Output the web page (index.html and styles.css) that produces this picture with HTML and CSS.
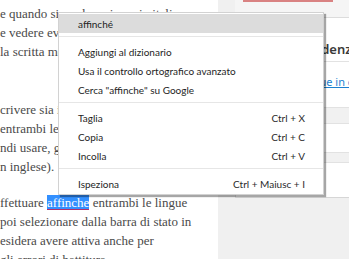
FILE: index.html
```html
<!DOCTYPE html>
<html lang="it">
<head>
    <meta charset="UTF-8">
    <meta name="viewport" content="width=device-width, initial-scale=1.0">
    <title>Menu contestuale</title>
    <link rel="stylesheet" href="styles.css">
</head>
<body>
    <div class="page">
        <main class="article">
            <p class="para para-first">
                <span class="line">e quando si vuole scrivere in italiano</span>
                <span class="line">e vedere evidenziati gli errori di</span>
                <span class="line">la scritta mostrata nella barra</span>
            </p>
            <p class="para para-second">
                <span class="line">crivere sia in italiano che in</span>
                <span class="line">entrambi le lingue attive nel</span>
                <span class="line">ndi usare, già dal primo avvio</span>
                <span class="line">n inglese).</span>
            </p>
            <p class="para">
                <span class="line">ffettuare <span class="selected">affinche</span> entrambi le lingue</span>
                <span class="line">poi selezionare dalla barra di stato in</span>
                <span class="line">esidera avere attiva anche per</span>
                <span class="line">gli errori di battitura</span>
            </p>
        </main>

        <aside class="sidebar">
            <div class="side-top">
                <div class="side-button"></div>
            </div>
            <div class="widget">
                <div class="widget-title">Corrispondenze</div>
                <div class="widget-row">
                    <a class="widget-link" href="#">Tutte le lingue in elenco</a>
                </div>
                <div class="widget-band"></div>
                <div class="widget-row widget-row-short"></div>
                <div class="widget-band widget-band-thin"></div>
                <div class="widget-row widget-row-last"></div>
            </div>
        </aside>

        <!-- Menu contestuale del correttore -->
        <div class="context-menu">
            <div class="menu-item menu-item-active">affinché</div>
            <div class="menu-separator"></div>
            <div class="menu-item">Aggiungi al dizionario</div>
            <div class="menu-item">Usa il controllo ortografico avanzato</div>
            <div class="menu-item">Cerca "affinche" su Google</div>
            <div class="menu-separator"></div>
            <div class="menu-item"><span>Taglia</span><span class="shortcut">Ctrl + X</span></div>
            <div class="menu-item"><span>Copia</span><span class="shortcut">Ctrl + C</span></div>
            <div class="menu-item"><span>Incolla</span><span class="shortcut">Ctrl + V</span></div>
            <div class="menu-separator"></div>
            <div class="menu-item"><span>Ispeziona</span><span class="shortcut">Ctrl + Maiusc + I</span></div>
        </div>
    </div>
</body>
</html>
```

FILE: styles.css
```css
* {
    margin: 0;
    padding: 0;
    box-sizing: border-box;
}

body {
    background: #fff;
    overflow: hidden;
}

.page {
    position: relative;
    display: grid;
    grid-template-columns: 218px 1fr;
    width: 349px;
    height: 259px;
    overflow: hidden;
}

/* Testo dell'articolo */
.article {
    background: #fff;
    padding-top: 4px;
    font-family: 'Liberation Serif', 'Times New Roman', serif;
    font-size: 13px;
    line-height: 19px;
    color: #4a4a4a;
    overflow: hidden;
}

.line {
    display: block;
    white-space: nowrap;
}

.para-first {
    margin-bottom: 39px;
}

.para-second {
    margin-bottom: 17px;
}

.selected {
    background: #3390ff;
    color: #fff;
    box-shadow: inset 0 -1px #b0306a;
}

/* Barra laterale */
.sidebar {
    background: #f0f0f0;
    padding-left: 17px;
    overflow: hidden;
}

.side-top {
    height: 18px;
    width: 140px;
    background: #f5f5f5;
    border-bottom: 1px solid #dcdcdc;
}

.side-button {
    margin-left: 8px;
    width: 90px;
    height: 2px;
    background: #d98282;
}

.widget {
    width: 140px;
    background: #fff;
    border-left: 1px solid #dcdcdc;
    border-bottom: 1px solid #d6d6d6;
}

.widget-title {
    height: 44px;
    padding: 22px 0 0 23px;
    font-family: 'Noto Sans', 'Open Sans', sans-serif;
    font-size: 13px;
    font-weight: 600;
    color: #3a3a3a;
    border-bottom: 1px solid #e2e2e2;
    white-space: nowrap;
}

.widget-row {
    height: 46px;
    padding: 12px 0 0 23px;
    font-family: 'Noto Sans', 'Open Sans', sans-serif;
    font-size: 11px;
    white-space: nowrap;
    border-bottom: 1px solid #e2e2e2;
}

.widget-link {
    color: #1b7fd0;
    text-decoration: underline;
}

.widget-band {
    height: 16px;
    background: #f1f1f1;
    border-bottom: 1px solid #e2e2e2;
}

.widget-band-thin {
    height: 10px;
}

.widget-row-short {
    height: 29px;
}

.widget-row-last {
    height: 34px;
    border-bottom: none;
}

/* Menu contestuale */
.context-menu {
    position: absolute;
    left: 58px;
    top: 12px;
    width: 266px;
    padding: 1px 0;
    background: #fff;
    border: 1px solid #d2d2d2;
    box-shadow: 2px 2px 1px rgba(0, 0, 0, 0.35);
    font-family: Lato, 'Noto Sans', sans-serif;
    font-size: 10px;
    color: #1e1e1e;
}

.menu-item {
    height: 19px;
    display: flex;
    align-items: center;
    justify-content: space-between;
    padding: 0 18px 0 19px;
    white-space: nowrap;
}

.menu-item-active {
    background: #dcdcdc;
}

.shortcut {
    color: #2a2a2a;
}

.menu-separator {
    height: 1px;
    margin: 3px 0 5px;
    background: #e6e6e6;
}
```
